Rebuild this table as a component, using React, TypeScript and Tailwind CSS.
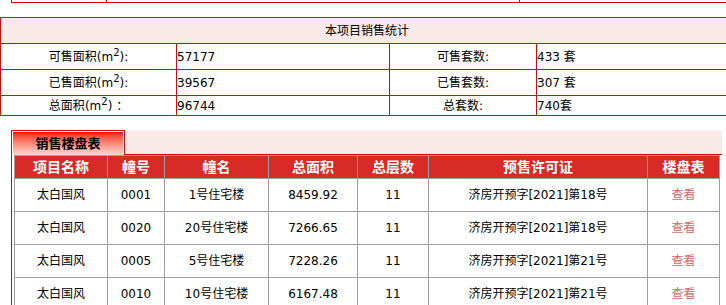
const stats = [
  { a: "可售面积", av: "57177", b: "可售套数:", bv: "433 套", h: "h-[26px]" },
  { a: "已售面积", av: "39567", b: "已售套数:", bv: "307 套", h: "h-[26px]" },
  { a: "总面积", av: "96744", b: "总套数:", bv: "740套", h: "h-[20px]" },
];

const rows = [
  ["太白国风", "0001", "1号住宅楼", "8459.92", "11", "济房开预字[2021]第18号"],
  ["太白国风", "0020", "20号住宅楼", "7266.65", "11", "济房开预字[2021]第18号"],
  ["太白国风", "0005", "5号住宅楼", "7228.26", "11", "济房开预字[2021]第21号"],
  ["太白国风", "0010", "10号住宅楼", "6167.48", "11", "济房开预字[2021]第21号"],
];

const heads = ["项目名称", "幢号", "幢名", "总面积", "总层数", "预售许可证", "楼盘表"];
const widths = ["w-[93px]", "w-[57px]", "w-[104px]", "w-[89px]", "w-[71px]", "w-[219px]", "w-[72px]"];

function Label({ text, colon }: { text: string; colon: string }) {
  return (
    <span>
      {text}(m<sup className="text-[10px]">2</sup>){colon}
    </span>
  );
}

export default function App() {
  return (
    <div
      className="h-[305px] w-[726px] overflow-hidden bg-white text-[12px] text-black"
      style={{ fontFamily: '"DejaVu Sans", "Noto Sans CJK SC", sans-serif' }}
    >
      {/* tail of the table above */}
      <div className="ml-[11px] flex h-[3px] w-[720px] border-b border-l border-[#e60000]">
        <div className="w-[95px] border-r border-[#e60000]" />
        <div className="w-[413px] border-r border-[#e60000]" />
        <div className="flex-1" />
      </div>

      {/* 本项目销售统计 */}
      <div className="mt-[14px] w-[733px] border-l border-t border-[#e60000]">
        <div className="flex h-[26px] items-center justify-center border-b border-[#e60000] bg-[#f9e9e7]">
          本项目销售统计
        </div>
        {stats.map((s, i) => (
          <div key={i} className={`flex ${s.h} border-b border-[#e60000]`}>
            <div className="flex w-[176px] items-center justify-center border-r border-[#e60000]">
              <Label text={s.a} colon={i === 2 ? " ：" : ":"} />
            </div>
            <div className="flex w-[213px] items-center border-r border-[#e60000]">{s.av}</div>
            <div className="flex w-[147px] items-center justify-center border-r border-[#e60000]">{s.b}</div>
            <div className="flex flex-1 items-center">{s.bv}</div>
          </div>
        ))}
      </div>

      {/* 销售楼盘表 */}
      <div className="ml-[11px] mt-[14px] w-[711px] border-l border-[#e60000]">
        <div className="flex items-end">
          <div className="h-[25px] w-[113px] border-r border-t border-[#e60000] bg-white pl-px pr-px pt-px">
            <div className="flex h-full items-center justify-center bg-gradient-to-b from-[#f00000] to-[#f6d8d2] text-[13px] font-bold">
              销售楼盘表
            </div>
          </div>
          <div className="h-[24px] flex-1 border-b border-[#e60000] bg-[#f9e9e7]" />
        </div>
        <div className="pl-[2px]">
          <div className="w-[706px] border-l border-t border-[#a0a0a0]">
            <div className="flex h-[23px] border-b border-[#a0a0a0] bg-[#d82a26] text-[14px] font-bold text-white">
              {heads.map((h, i) => (
                <div key={i} className={`${widths[i]} flex items-center justify-center border-r border-[#a0a0a0]`}>
                  {h}
                </div>
              ))}
            </div>
            {rows.map((r, ri) => (
              <div key={ri} className="flex h-[33px] border-b border-[#a0a0a0]">
                {r.map((c, i) => (
                  <div key={i} className={`${widths[i]} flex items-center justify-center border-r border-[#a0a0a0]`}>
                    {c}
                  </div>
                ))}
                <div className={`${widths[6]} flex items-center justify-center border-r border-[#a0a0a0] text-[#d46868]`}>
                  查看
                </div>
              </div>
            ))}
          </div>
        </div>
      </div>
    </div>
  );
}
